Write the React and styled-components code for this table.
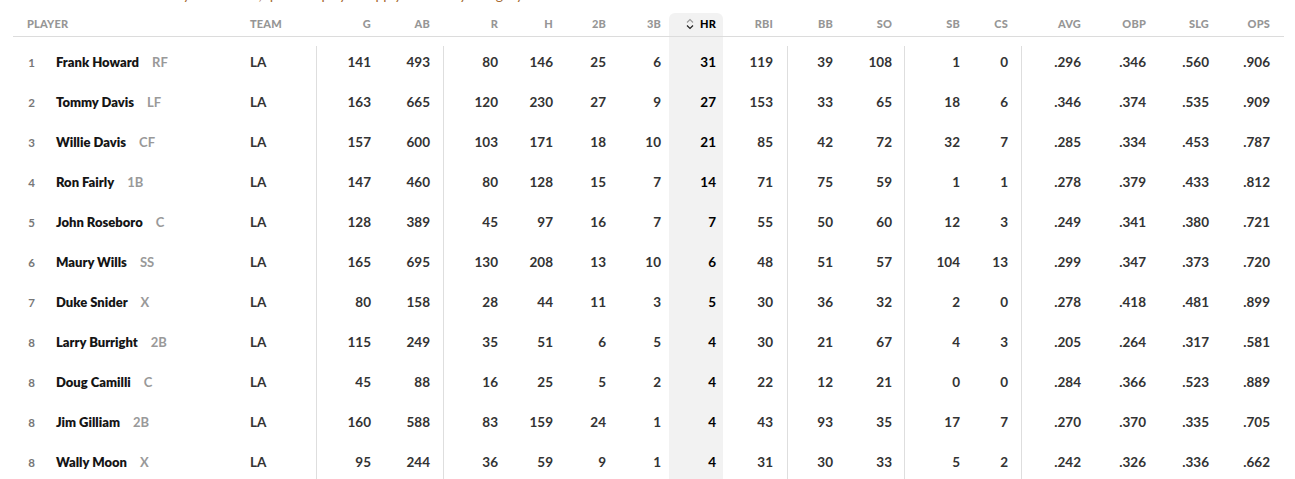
import React from 'react';
import styled, { createGlobalStyle } from 'styled-components';

const GlobalStyle = createGlobalStyle`
  html, body {
    margin: 0;
    padding: 0;
    background: #fff;
  }
  body {
    font-family: Lato, "Open Sans", Arial, sans-serif;
  }
`;

// column setup: width, alignment, extra padding, left divider, highlighted
const columns = [
  { key: 'rank', w: 37, align: 'center' },
  { key: 'player', w: 200, align: 'left', pl: 6 },
  { key: 'team', label: 'TEAM', w: 66, align: 'left' },
  { key: 'g', label: 'G', w: 55, divider: true },
  { key: 'ab', label: 'AB', w: 72, pr: 13 },
  { key: 'r', label: 'R', w: 55, divider: true },
  { key: 'h', label: 'H', w: 55 },
  { key: 'd', label: '2B', w: 53 },
  { key: 't', label: '3B', w: 63, pr: 8 },
  { key: 'hr', label: 'HR', w: 54, pr: 7, hl: true },
  { key: 'rbi', label: 'RBI', w: 64, pr: 14 },
  { key: 'bb', label: 'BB', w: 46, divider: true },
  { key: 'so', label: 'SO', w: 71, pr: 12 },
  { key: 'sb', label: 'SB', w: 56, divider: true },
  { key: 'cs', label: 'CS', w: 61, pr: 13 },
  { key: 'avg', label: 'AVG', w: 60, divider: true },
  { key: 'obp', label: 'OBP', w: 65 },
  { key: 'slg', label: 'SLG', w: 63 },
  { key: 'ops', label: 'OPS', w: 75, pr: 14 },
];

const players = [
  ['1', 'Frank Howard', 'RF', 'LA', 141, 493, 80, 146, 25, 6, 31, 119, 39, 108, 1, 0, '.296', '.346', '.560', '.906'],
  ['2', 'Tommy Davis', 'LF', 'LA', 163, 665, 120, 230, 27, 9, 27, 153, 33, 65, 18, 6, '.346', '.374', '.535', '.909'],
  ['3', 'Willie Davis', 'CF', 'LA', 157, 600, 103, 171, 18, 10, 21, 85, 42, 72, 32, 7, '.285', '.334', '.453', '.787'],
  ['4', 'Ron Fairly', '1B', 'LA', 147, 460, 80, 128, 15, 7, 14, 71, 75, 59, 1, 1, '.278', '.379', '.433', '.812'],
  ['5', 'John Roseboro', 'C', 'LA', 128, 389, 45, 97, 16, 7, 7, 55, 50, 60, 12, 3, '.249', '.341', '.380', '.721'],
  ['6', 'Maury Wills', 'SS', 'LA', 165, 695, 130, 208, 13, 10, 6, 48, 51, 57, 104, 13, '.299', '.347', '.373', '.720'],
  ['7', 'Duke Snider', 'X', 'LA', 80, 158, 28, 44, 11, 3, 5, 30, 36, 32, 2, 0, '.278', '.418', '.481', '.899'],
  ['8', 'Larry Burright', '2B', 'LA', 115, 249, 35, 51, 6, 5, 4, 30, 21, 67, 4, 3, '.205', '.264', '.317', '.581'],
  ['8', 'Doug Camilli', 'C', 'LA', 45, 88, 16, 25, 5, 2, 4, 22, 12, 21, 0, 0, '.284', '.366', '.523', '.889'],
  ['8', 'Jim Gilliam', '2B', 'LA', 160, 588, 83, 159, 24, 1, 4, 43, 93, 35, 17, 7, '.270', '.370', '.335', '.705'],
  ['8', 'Wally Moon', 'X', 'LA', 95, 244, 36, 59, 9, 1, 4, 31, 30, 33, 5, 2, '.242', '.326', '.336', '.662'],
];

const Page = styled.div`
  padding: 0 11px 0 13px;
`;

// the intro line above is scrolled off; only its descenders peek in
const Intro = styled.div`
  height: 13px;
  overflow: hidden;
`;

const IntroText = styled.p`
  margin: -14px 0 0 118px;
  font-size: 14px;
  line-height: 18px;
  color: #a5672e;
  white-space: nowrap;
`;

const Table = styled.table`
  width: 1271px;
  table-layout: fixed;
  border-collapse: separate;
  border-spacing: 0;
`;

const Col = styled.col`
  width: ${(p) => p.$w}px;
`;

const Th = styled.th`
  height: 20px;
  padding: 0 ${(p) => p.$pr || 0}px 3px ${(p) => p.$pl || 0}px;
  text-align: ${(p) => p.$align || 'right'};
  vertical-align: middle;
  font-size: 11px;
  font-weight: 900;
  letter-spacing: 0.2px;
  color: ${(p) => (p.$hl ? '#000' : '#969696')};
  background: ${(p) => (p.$hl ? '#f2f2f2' : 'transparent')};
  border-radius: ${(p) => (p.$hl ? '6px 6px 0 0' : '0')};
  border-bottom: 1px solid #dcdcdc;
  white-space: nowrap;
`;

const SortIcon = styled.svg`
  width: 8px;
  height: 12px;
  margin-right: 6px;
  vertical-align: -2px;
`;

const SpacerCell = styled.td`
  height: 9px;
  padding: 0;
  background: ${(p) => (p.$hl ? '#f2f2f2' : 'transparent')};
`;

const Td = styled.td`
  height: 32px;
  padding: 0 ${(p) => p.$pr || 0}px 8px ${(p) => p.$pl || 0}px;
  text-align: ${(p) => p.$align || 'right'};
  vertical-align: middle;
  font-size: 13.5px;
  font-weight: 700;
  color: ${(p) => (p.$hl ? '#000' : '#333')};
  background: ${(p) => (p.$hl ? '#f2f2f2' : 'transparent')};
  box-shadow: ${(p) => (p.$divider ? 'inset 1px 0 0 #dedede' : 'none')};
  white-space: nowrap;
`;

const Rank = styled.span`
  font-size: 11.5px;
  font-weight: 700;
  color: #777;
`;

const Name = styled.span`
  color: #151515;
  font-size: 13px;
  font-weight: 800;
  margin-right: 13px;
`;

const Pos = styled.span`
  color: #999;
  font-size: 13px;
  font-weight: 700;
`;

const SortArrows = () => (
  <SortIcon viewBox="0 0 8 12">
    <path d="M1 4.5 L4 1.5 L7 4.5" fill="none" stroke="#999" strokeWidth="1.1" />
    <path d="M1 7.5 L4 10.5 L7 7.5" fill="none" stroke="#222" strokeWidth="1.2" />
  </SortIcon>
);

export default function App() {
  const stats = columns.slice(3);
  return (
    <Page>
      <GlobalStyle />
      <Intro>
        <IntroText>
          Sorted by home runs, qualified players apply to rank by category.
        </IntroText>
      </Intro>
      <Table>
        <colgroup>
          {columns.map((c) => (
            <Col key={c.key} $w={c.w} />
          ))}
        </colgroup>
        <thead>
          <tr>
            <Th colSpan={2} $align="left" $pl={14}>PLAYER</Th>
            <Th $align="left">TEAM</Th>
            {stats.map((c) => (
              <Th key={c.key} $pr={c.pr} $hl={c.hl}>
                {c.hl && <SortArrows />}
                {c.label}
              </Th>
            ))}
          </tr>
        </thead>
        <tbody>
          <tr>
            {columns.map((c) => (
              <SpacerCell key={c.key} $hl={c.hl} />
            ))}
          </tr>
          {players.map((p, i) => {
            const [rank, name, pos, team, ...nums] = p;
            return (
              <tr key={i}>
                <Td $align="center"><Rank>{rank}</Rank></Td>
                <Td $align="left" $pl={6}>
                  <Name>{name}</Name>
                  <Pos>{pos}</Pos>
                </Td>
                <Td $align="left">{team}</Td>
                {stats.map((c, j) => (
                  <Td key={c.key} $pr={c.pr} $hl={c.hl} $divider={c.divider}>
                    {nums[j]}
                  </Td>
                ))}
              </tr>
            );
          })}
        </tbody>
      </Table>
    </Page>
  );
}
